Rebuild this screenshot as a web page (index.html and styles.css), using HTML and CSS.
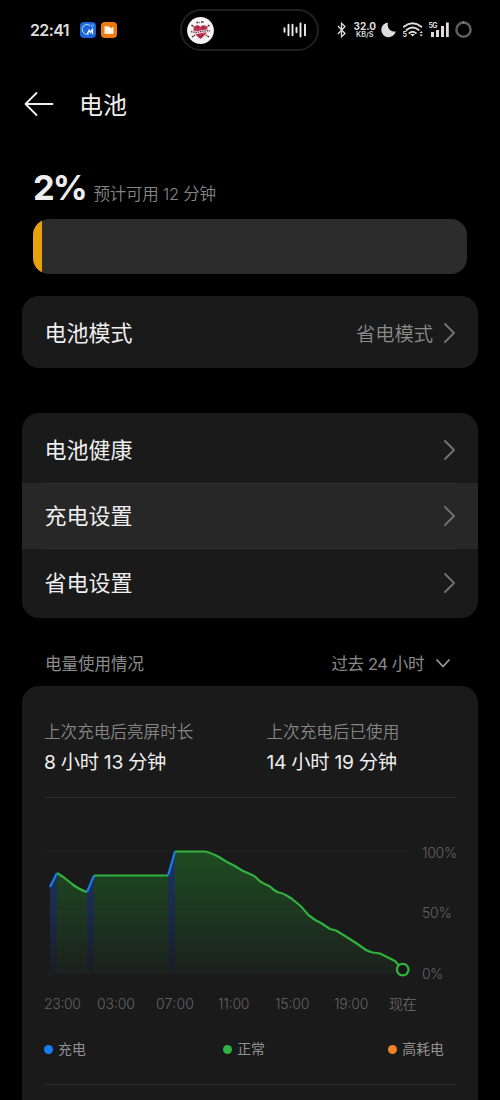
FILE: index.html
```html
<!DOCTYPE html>
<html lang="zh-CN">
<head>
<meta charset="utf-8">
<title>电池</title>
<link rel="stylesheet" href="styles.css">
</head>
<body>
<main class="screen">
  <div class="status">
    <span class="clock">22:41</span>
    <svg class="app app-first" viewBox="0 0 16 16"><rect width="16" height="16" rx="4" fill="#1d66d9"/><path d="M10.2 3.5A5 5 0 1 0 9 12" fill="none" stroke="#b9dcff" stroke-width="1"/><path d="M7.2 12 9.2 8.2l1.1 2.3 2.2-3v4.7" fill="none" stroke="#fff" stroke-width="1.3"/><circle cx="12.4" cy="3.7" r="1.1" fill="none" stroke="#9cc9ff" stroke-width=".7"/></svg>
    <svg class="app" viewBox="0 0 16 16"><rect width="16" height="16" rx="4" fill="#ee7a12"/><path d="M3.500 4.300h4l1 1h4v6.400H9.300l-1.300.5-1.300-.5H3.500z" fill="#fff6e8"/><path d="m9.300 5 1 1.600 1.200-1.600" fill="#ee7a12"/></svg>
    <div class="island">
      <svg class="avatar" viewBox="0 0 27 27"><circle cx="13.5" cy="13.5" r="13.4" fill="#f7f2f3"/><path d="M13.5 22C9 18.5 6.5 16 6.5 12c0-4 5-5 7-2 2-3 7-2 7 2 0 4-2.500 6.500-7 10z" fill="#c43556"/><path d="M3 12.500q5 2.500 10.500 1t10.500-1v3.700q-5-1.500-10.500 0T3 16z" fill="#eedde1"/><path d="M4 14.500q5 1.500 9.500.2t9.500-.7" stroke="#57303f" stroke-width="1.200" stroke-dasharray="1.300 1" fill="none"/><path d="M9.500 5.500h3m1.500-.5h3M4.500 8l2.500 2M22.500 8 20 10M5 20l3-2m14 2-3-2" stroke="#3f2730" stroke-width="1.500" stroke-dasharray="1.800 .6"/><path d="M9.500 11q1-2 2.500 0m3 0q1.500-2 3 0M11 18l2.500 2 2.500-2" stroke="#7b1935" fill="none"/></svg>
      <svg class="wave" viewBox="0 0 24 16"><path d="M1.500 6.200v3.600M5.500 2.800v10.400M9.500 2.800v10.400M13.500 5.800v4.400M17.500 1.500v13M22 2.800v10.400" stroke="#eee" stroke-width="1.900" stroke-linecap="round"/></svg>
    </div>
    <svg class="indicators" viewBox="332 18 142 24">
      <path d="m338 26 7 7.500-3.500 3.200V23.300L345 26.500l-7 7.500" fill="none" stroke="#ddd" stroke-width="1.300"/>
      <text class="speed" x="353.500" y="29.800" textLength="22.500">32.0</text>
      <text class="unit" x="356" y="36.800" textLength="17.500" lengthAdjust="spacingAndGlyphs">KB/S</text>
      <path d="M388 22.600a7.300 7.300 0 1 0 7.700 8.800 6.800 6.800 0 0 1-7.700-8.800z" fill="#ddd"/>
      <g fill="none" stroke="#ddd" stroke-width="1.800" stroke-linecap="round"><path d="M403.800 26.800q8.800-7 17.600 0M406.500 30q6.100-5 12.200 0M409.300 33q3.300-2.600 6.600 0"/></g>
      <path d="m410.200 34 4.800 0-2.400 2.500z" fill="#ddd"/><path d="m419.500 33 1.700-2 1.700 2zm0 1.600 1.700 2 1.700-2z" fill="#ddd"/>
      <text class="tiny" x="402.500" y="37">5</text>
      <text class="tiny" x="428.500" y="28" textLength="9">5G</text>
      <path d="M431 32h3v5h-3zM436 30h3v7h-3zM441 26h3v11h-3zM446 22.500h2.800V37H446z" fill="#ddd"/>
      <circle cx="463.500" cy="29.700" r="7.100" fill="none" stroke="#5f5f5f" stroke-width="2.500"/><path d="M463.500 21.500v2" stroke="#999" stroke-width="1.600"/>
    </svg>
  </div>

  <header class="header">
    <svg class="back" viewBox="0 0 30 26"><path d="M28.500 13H1.500M12.500 2 1.500 13l11 11" fill="none" stroke="#eee" stroke-width="1.800" stroke-linecap="round" stroke-linejoin="round"/></svg>
    <h1 class="title">电池</h1>
  </header>

  <section class="level">
    <div class="level-text"><strong class="percent">2%</strong><span class="estimate">预计可用 12 分钟</span></div>
    <div class="bar"><div class="bar-fill"></div></div>
  </section>

  <section class="card mode">
    <span class="label">电池模式</span><span class="value">省电模式</span>
    <svg class="chevron" viewBox="0 0 11 20"><path d="m1 1 9 9-9 9"/></svg>
  </section>

  <section class="card list">
    <div class="row first"><span class="label">电池健康</span><svg class="chevron" viewBox="0 0 11 20"><path d="m1 1 9 9-9 9"/></svg></div>
    <div class="row active"><span class="label">充电设置</span><svg class="chevron" viewBox="0 0 11 20"><path d="m1 1 9 9-9 9"/></svg></div>
    <div class="row last"><span class="label">省电设置</span><svg class="chevron" viewBox="0 0 11 20"><path d="m1 1 9 9-9 9"/></svg></div>
  </section>

  <div class="section-head">
    <span>电量使用情况</span><span class="range">过去 24 小时</span>
    <svg class="down" viewBox="0 0 14 9"><path d="m1 1 6 6.500L13 1" fill="none" stroke="#9a9a9a" stroke-width="1.800" stroke-linecap="round"/></svg>
  </div>

  <section class="card usage">
    <div class="stats">
      <div class="stat"><div class="stat-label">上次充电后亮屏时长</div><div class="stat-value">8 小时 13 分钟</div></div>
      <div class="stat"><div class="stat-label">上次充电后已使用</div><div class="stat-value">14 小时 19 分钟</div></div>
    </div>
    <svg class="chart" viewBox="44 798 412 232">
      <defs>
        <linearGradient id="normal" gradientUnits="userSpaceOnUse" x1="0" y1="851" x2="0" y2="973"><stop stop-color="#1e4c21"/><stop offset=".5" stop-color="#1d3720"/><stop offset="1" stop-color="#1b211c"/></linearGradient>
        <linearGradient id="charge" gradientUnits="userSpaceOnUse" x1="0" y1="851" x2="0" y2="973"><stop stop-color="#1a3765"/><stop offset=".5" stop-color="#1a2a4b"/><stop offset="1" stop-color="#1b1c22"/></linearGradient>
      </defs>
      <path fill="url(#normal)" d="M57 973V873L64 877.500 72 884 80 889 87 892 94 875.500H168L175 851.500H205L210 853 219 857 227 862 234 865.500 242 870.500 250 874 256 877.500 263 884 270 886.500 277 892 284 894 292 899 300 905.500 309 915.500 316 920.500 330 929 336 930.500 345 936 356 943 366 950 373 952.500 380 953.500 388 957.500 395 961 402 970V973z"/>
      <path fill="url(#charge)" d="M50 973V887L57 873V973zM87 973V892L94 875.500V973zM168 973V875.500L175 851.500V973z"/>
      <path d="M44 851.500H409M44 912H409M44 973H409" stroke="#fff" stroke-opacity=".035"/>
      <g fill="none" stroke-width="2.200" stroke-linejoin="round">
        <path stroke="#31b13e" d="M57 873 64 877.500 72 884Q80 890 87 892M94 875.500H168M175 851.500H205C209 852 215 855 219 857L227 862 234 865.500 242 870.500 250 874C253 875 256 877 258 879.500 262 884 266 884 270 886.500 273 889 275 892 279 892.500 284 893 289 897 292 899L300 905.500C304 909 306 913 309 915.500L316 920.500 321 923 330 929 336 930.500 345 936 356 943 366 950Q370 952 373 952.500L380 953.500 388 957.500 395 961 399 965.500"/>
        <path stroke="#167cf0" d="M50 887 57 873M87 892 94 875.500M168 875.500 175 851.500"/>
      </g>
      <circle cx="402.700" cy="969.600" r="5.800" fill="#171917" stroke="#31b13e" stroke-width="2.300"/>
      <g class="axis">
        <text x="422" y="857.500" textLength="35">100%</text><text x="422" y="918" textLength="29.500">50%</text><text x="422" y="978.500" textLength="21">0%</text>
        <text x="44" y="1009" textLength="37">23:00</text><text x="97" y="1009" textLength="38">03:00</text><text x="156" y="1009" textLength="38">07:00</text><text x="218" y="1009" textLength="31.500">11:00</text><text x="275" y="1009" textLength="34.500">15:00</text><text x="334" y="1009" textLength="34.500">19:00</text><text x="389" y="1009" textLength="27.500">现在</text>
      </g>
    </svg>
    <div class="legend">
      <span class="key"><i class="dot blue"></i>充电</span><span class="key middle"><i class="dot green"></i>正常</span><span class="key"><i class="dot orange"></i>高耗电</span>
    </div>
  </section>
</main>
</body>
</html>
```
FILE: styles.css
```css
* { box-sizing: border-box; }
body { margin: 0; background: #000; color: #eee; font-family: Inter, "Noto Sans CJK SC", sans-serif; }
svg { display: block; flex: none; overflow: visible; }
.screen { width: 500px; height: 1100px; overflow: hidden; display: flex; flex-direction: column; background: #000; }
.screen > * { flex: none; }

.status { height: 60px; padding-left: 30px; display: flex; align-items: center; }
.clock { width: 50px; font-size: 16px; font-weight: 600; letter-spacing: -.6px; color: #ddd; line-height: 20px; }
.app { width: 16px; height: 16px; margin-right: 5px; }
.island { width: 139px; height: 42px; margin-left: 58px; padding: 0 10px 0 5px; border: 2px solid #202020; border-radius: 21px; display: flex; align-items: center; justify-content: space-between; }
.avatar { width: 27px; height: 27px; }
.wave { width: 24px; height: 16px; }
.indicators { width: 142px; height: 24px; margin-left: 13px; }
.speed { font-size: 10px; font-weight: 700; fill: #ddd; }
.unit { font-size: 7px; font-weight: 600; fill: #ddd; }
.tiny { font-size: 7px; font-weight: 700; fill: #ddd; }

.header { height: 90px; padding-left: 24px; display: flex; align-items: center; }
.back { width: 30px; height: 26px; margin-top: -2px; }
.title { margin: 2px 0 0 25px; font-size: 24px; font-weight: 400; line-height: 36px; }

.level { padding: 16px 33px 0; }
.level-text { height: 53px; display: flex; align-items: baseline; line-height: 44px; }
.percent { width: 60.500px; font-size: 34.500px; font-weight: 700; letter-spacing: -2px; color: #eee; }
.estimate { font-size: 16.500px; font-weight: 350; color: #858585; letter-spacing: -.28px; }
.bar { height: 55px; border-radius: 16px; background: #2c2c2c; overflow: hidden; }
.bar-fill { width: 9px; height: 100%; background: #e7a10d; }

.card { margin: 0 22px; border-radius: 17px; background: #1a1a1a; overflow: hidden; }
.mode { height: 72px; margin-top: 22px; padding: 2px 23px 0 22.500px; display: flex; align-items: center; }
.label { font-size: 22px; line-height: 32px; flex: 1; }
.value { font-size: 19.300px; font-weight: 350; color: #8b8b8b; margin-right: 11px; }
.chevron { width: 11px; height: 20px; }
.chevron path { fill: none; stroke: #737373; stroke-width: 1.800; stroke-linecap: round; stroke-linejoin: round; }
.list { margin-top: 45px; height: 205px; }
.row { height: 66px; padding: 0 23px 0 22.500px; display: flex; align-items: center; }
.first { height: 70px; padding-top: 3px; }
.active { background: linear-gradient(#303030, #303030) 22px 0 / 412px 1px no-repeat, linear-gradient(#303030, #303030) 22px 100% / 412px 1px no-repeat, #272727; }
.last { height: 69px; padding-bottom: 1px; }

.section-head { height: 68px; padding: 24px 50px 0 45px; display: flex; align-items: center; font-size: 16.500px; line-height: 24px; color: #8b8b8b; }
.range { margin-left: auto; margin-right: 12px; letter-spacing: -.4px; }
.down { width: 14px; height: 9px; margin-top: -2px; }

.usage { height: 414px; border-radius: 17px 17px 0 0; padding: 30px 22px 0; }
.stats { height: 82px; padding-top: 1px; display: grid; grid-template-columns: 222.500px 1fr; border-bottom: 1px solid #2c2c2c; white-space: nowrap; }
.stat-label { font-size: 16.600px; font-weight: 350; line-height: 30px; color: #858585; }
.stat-value { font-size: 19.300px; line-height: 30px; color: #eee; letter-spacing: -.3px; }
.chart { width: 412px; height: 232px; }
.axis { font-size: 14px; font-weight: 350; fill: #626262; }
.legend { height: 55px; padding: 6px 12px 0 0; display: flex; justify-content: space-between; font-size: 13.900px; line-height: 26px; color: #929292; border-bottom: 1px solid #2c2c2c; }
.key { display: flex; align-items: center; height: 26px; }
.middle { margin-left: 14px; }
.dot { width: 9px; height: 9px; margin-right: 5px; border-radius: 50%; }
.blue { background: #167cf0; }
.green { background: #31b13e; }
.orange { background: #ef8127; }
```
